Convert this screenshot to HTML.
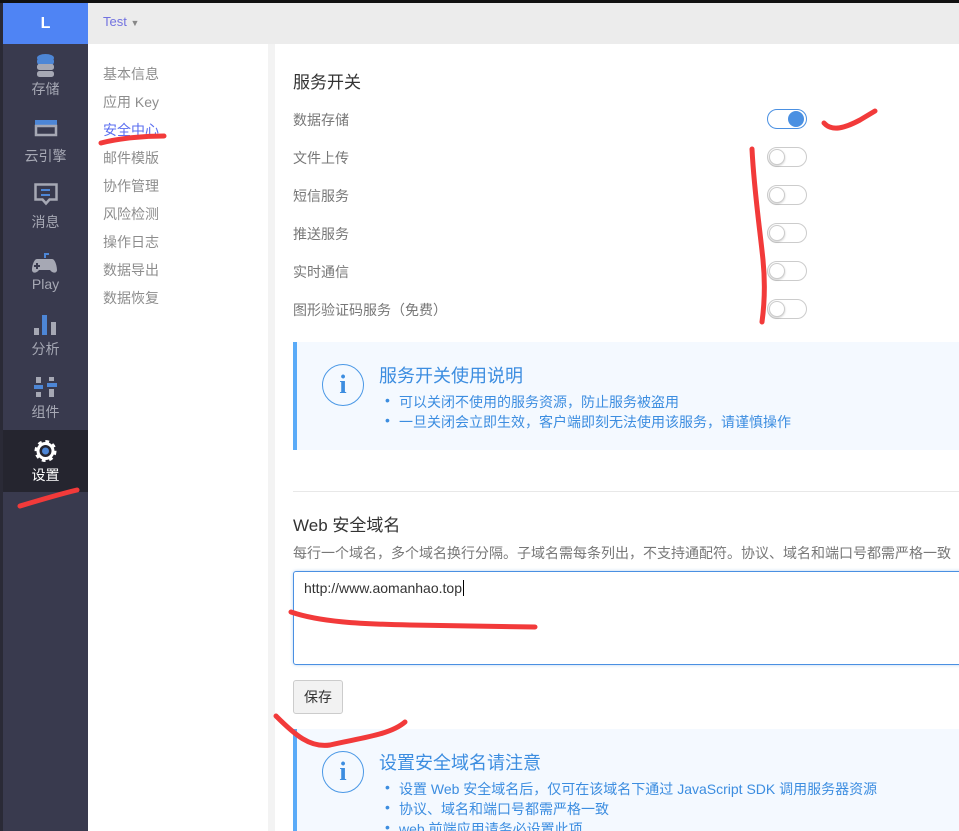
<!DOCTYPE html>
<html><head><meta charset="utf-8"><style>
*{margin:0;padding:0;box-sizing:border-box}
html,body{width:959px;height:831px;overflow:hidden}
body{background:#fff;font-family:"Liberation Sans","Noto Sans CJK SC",sans-serif;position:relative}
.abs{position:absolute}
#top{left:0;top:0;width:959px;height:3px;background:#111}
#left0{left:0;top:0;width:3px;height:831px;background:#2a2a36}
#side{left:3px;top:3px;width:85px;height:828px;background:#393a4e}
#logo{left:3px;top:3px;width:85px;height:41px;background:#4f84f4;color:#fff;font-weight:bold;font-size:16px;text-align:center;line-height:41px}
.si{position:absolute;left:3px;width:85px;text-align:center;color:#a6a8b4;font-size:14px}
#topbar{left:88px;top:3px;width:871px;height:41px;background:#ececec}
#sub{left:88px;top:44px;width:180px;height:787px;background:#fff}
#gap{left:268px;top:44px;width:7px;height:787px;background:#f3f3f3}
.nv{position:absolute;left:103px;font-size:14px;color:#8d8d8d}
.lbl{position:absolute;left:293px;font-size:14px;color:#777}
.tg{position:absolute;left:767px;width:40px;height:20px;border:1px solid #ccc;border-radius:10px;background:#fff}
.tg .k{position:absolute;left:1px;top:1px;width:16px;height:16px;border-radius:50%;border:1px solid #ccc;background:#fff;box-shadow:0 1px 2px rgba(0,0,0,.2)}
.box{position:absolute;left:293px;width:666px;background:#f4f9ff;border-left:4px solid #5aabf8}
.ic{position:absolute;left:25px;width:42px;height:42px;border:1.5px solid #4a98e6;border-radius:50%;color:#3c8de0;font-family:"Liberation Serif",serif;font-size:26px;font-weight:bold;text-align:center;line-height:40px}
.bt{position:absolute;left:82px;font-size:18px;color:#3c8de0}
.li{position:absolute;left:102px;font-size:14px;color:#3c8de0}
.li::before{content:"•";position:absolute;left:-14px}
</style></head><body>
<div id="side" class="abs"></div>
<div id="left0" class="abs"></div>
<div id="top" class="abs"></div>
<div id="logo" class="abs">L</div>
<div class="abs" style="left:3px;top:430px;width:85px;height:62px;background:#25252f"></div>
<svg class="abs" style="left:0;top:0" width="88" height="500">
<g fill="#a6a8b4">
<ellipse cx="45.5" cy="58" rx="8.5" ry="4" fill="#4d86d6"/>
<rect x="37" y="58" width="17" height="7" rx="3" fill="#4d86d6"/>
<rect x="37" y="64" width="17" height="6" rx="2.5"/>
<rect x="37" y="71" width="17" height="6" rx="2.5"/>
<rect x="35" y="120" width="22" height="6" fill="#4d86d6"/>
<rect x="36" y="126" width="20" height="9" fill="none" stroke="#a6a8b4" stroke-width="2.5"/>
<path d="M35.5 184.5h21v15h-7l-3.5 4-3.5-4h-7z" fill="none" stroke="#a6a8b4" stroke-width="2.5"/>
<rect x="41" y="189" width="9" height="2" fill="#4d86d6"/><rect x="41" y="194" width="9" height="2" fill="#4d86d6"/>
<path d="M39 259h13c3 0 5 7 5 11 0 3-4 4-7 0h-11c-3 4-7 3-7 0 0-4 2-11 5-11z"/>
<path d="M45 258v-4h4" stroke="#4d86d6" stroke-width="2" fill="none"/>
<rect x="36" y="263" width="2" height="6" fill="#393a4e"/><rect x="34" y="265" width="6" height="2" fill="#393a4e"/>
<rect x="34" y="328" width="5" height="7"/><rect x="42" y="315" width="5" height="20" fill="#4d86d6"/><rect x="51" y="322" width="5" height="13"/>
<rect x="36" y="377" width="5" height="6"/><rect x="34" y="385" width="9" height="4" fill="#4d86d6"/><rect x="36" y="392" width="5" height="5"/>
<rect x="49" y="377" width="5" height="4"/><rect x="47" y="383" width="10" height="4" fill="#4d86d6"/><rect x="49" y="389" width="5" height="8"/>
</g>
<g transform="translate(45.5,451)"><circle r="9" fill="none" stroke="#fff" stroke-width="4" stroke-dasharray="3.5 3.5"/><circle r="7.5" fill="none" stroke="#fff" stroke-width="3"/><circle r="3.5" fill="#4d86d6"/></g>
</svg>
<div class="si" style="top:79px">存储</div>
<div class="si" style="top:146px">云引擎</div>
<div class="si" style="top:212px">消息</div>
<div class="si" style="top:276px">Play</div>
<div class="si" style="top:339px">分析</div>
<div class="si" style="top:402px">组件</div>
<div class="si" style="top:465px;color:#fff">设置</div>
<div id="topbar" class="abs"></div>
<div class="abs" style="left:103px;top:14px;font-size:13px;color:#7272e0">Test <span style="font-size:9px;color:#888">▼</span></div>
<div id="sub" class="abs"></div>
<div id="gap" class="abs"></div>
<div class="nv" style="top:64px">基本信息</div>
<div class="nv" style="top:92px">应用 Key</div>
<div class="nv" style="top:120px;color:#5a6ef0">安全中心</div>
<div class="nv" style="top:148px">邮件模版</div>
<div class="nv" style="top:176px">协作管理</div>
<div class="nv" style="top:204px">风险检测</div>
<div class="nv" style="top:232px">操作日志</div>
<div class="nv" style="top:260px">数据导出</div>
<div class="nv" style="top:288px">数据恢复</div>
<div class="abs" style="left:293px;top:68px;font-size:17px;color:#333">服务开关</div>
<div class="lbl" style="top:110px">数据存储</div>
<div class="lbl" style="top:148px">文件上传</div>
<div class="lbl" style="top:186px">短信服务</div>
<div class="lbl" style="top:224px">推送服务</div>
<div class="lbl" style="top:262px">实时通信</div>
<div class="lbl" style="top:300px">图形验证码服务（免费）</div>
<div class="tg" style="top:109px;border-color:#4a90e2"><div style="position:absolute;right:2px;top:1px;width:16px;height:16px;border-radius:50%;background:#4a90e2"></div></div>
<div class="tg" style="top:147px"><div class="k"></div></div>
<div class="tg" style="top:185px"><div class="k"></div></div>
<div class="tg" style="top:223px"><div class="k"></div></div>
<div class="tg" style="top:261px"><div class="k"></div></div>
<div class="tg" style="top:299px"><div class="k"></div></div>
<div class="box" style="top:342px;height:108px">
<div class="ic" style="top:22px">i</div>
<div class="bt" style="top:20px">服务开关使用说明</div>
<div class="li" style="top:50px">可以关闭不使用的服务资源，防止服务被盗用</div>
<div class="li" style="top:70px">一旦关闭会立即生效，客户端即刻无法使用该服务，请谨慎操作</div>
</div>
<div class="abs" style="left:293px;top:491px;width:666px;height:1px;background:#e8e8e8"></div>
<div class="abs" style="left:293px;top:511px;font-size:17px;color:#333">Web 安全域名</div>
<div class="abs" style="left:293px;top:543px;font-size:14px;color:#777;white-space:nowrap">每行一个域名，多个域名换行分隔。子域名需每条列出，不支持通配符。协议、域名和端口号都需严格一致</div>
<div class="abs" style="left:293px;top:571px;width:680px;height:94px;border:1px solid #4a90e2;border-radius:3px;box-shadow:0 0 3px rgba(74,144,226,.4)"></div>
<div class="abs" style="left:304px;top:580px;font-size:14px;color:#333">http://www.aomanhao.top<span style="border-left:1px solid #000;margin-left:1px"></span></div>
<div class="abs" style="left:293px;top:680px;width:50px;height:34px;border:1px solid #ccc;border-radius:3px;background:#f2f2f2;font-size:14px;color:#333;text-align:center;line-height:32px">保存</div>
<div class="box" style="top:729px;height:110px">
<div class="ic" style="top:22px">i</div>
<div class="bt" style="top:20px">设置安全域名请注意</div>
<div class="li" style="top:50px">设置 Web 安全域名后，仅可在该域名下通过 JavaScript SDK 调用服务器资源</div>
<div class="li" style="top:70px">协议、域名和端口号都需严格一致</div>
<div class="li" style="top:90px">web 前端应用请务必设置此项</div>
</div>
<svg class="abs" style="left:0;top:0" width="959" height="831" fill="none" stroke="#f23a3a" stroke-width="5" stroke-linecap="round">
<path d="M101 143C120 138 145 136 164 136"/>
<path d="M20 506C40 500 60 494 77 490"/>
<path d="M824 123C832 132 845 128 860 120L875 111"/>
<path d="M752 149C754 190 760 230 763 260C765 280 765 300 762 322"/>
<path d="M291 612C320 622 360 624 410 625L535 627"/>
<path d="M276 716C295 735 310 748 330 745C360 738 390 735 405 722"/>
</svg>
</body></html>
